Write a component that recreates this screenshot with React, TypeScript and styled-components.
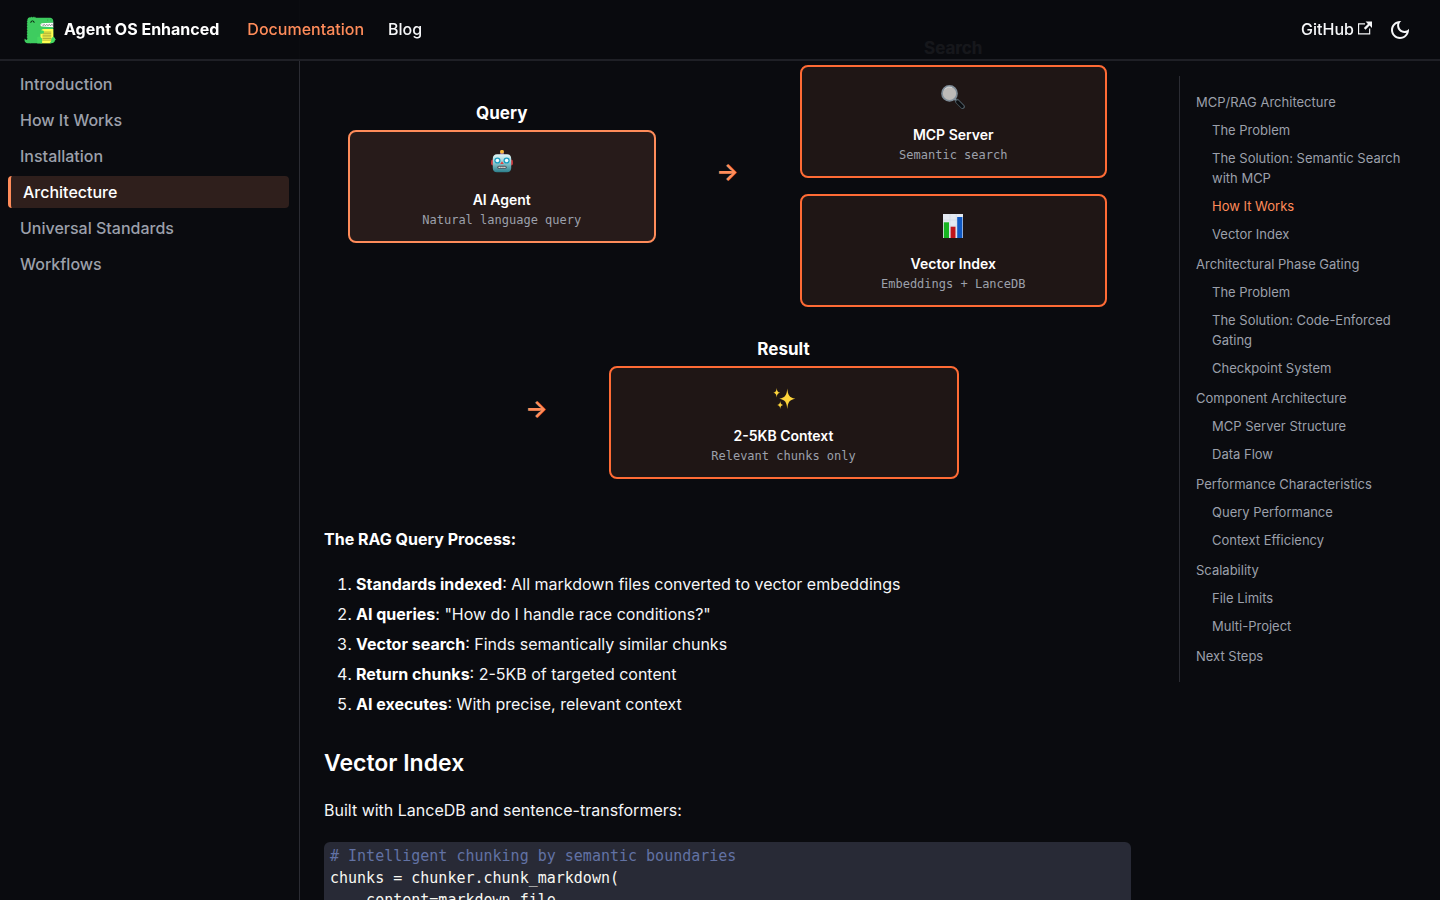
import React from "react";
import styled, { createGlobalStyle } from "styled-components";

const color = {
  page: "#0a0b0f",
  line: "#2b2c33",
  text: "#f5f6f8",
  strong: "#ffffff",
  muted: "#9ca0ab",
  accent: "#ff8c5a",
  accentDeep: "#ff6b35",
};

const sans = `Inter, "Liberation Sans", sans-serif`;
const mono = `"DejaVu Sans Mono", monospace`;

const GlobalStyle = createGlobalStyle`
  *, *::before, *::after { box-sizing: border-box; }
  body {
    margin: 0;
    background: ${color.page};
    color: ${color.text};
    font-family: ${sans};
    font-size: 16px;
    line-height: 26px;
  }
  a { color: inherit; text-decoration: none; }
  code { font: inherit; }
  ul, ol, p, h2, h3 { margin: 0; padding: 0; }
  ul { list-style: none; }
`;

const Shell = styled.div`
  height: 100vh;
  overflow: hidden;
`;

const Header = styled.header`
  position: fixed;
  inset: 0 0 auto 0;
  z-index: 10;
  height: 61px;
  padding: 0 24px;
  display: flex;
  align-items: center;
  background: rgba(10, 11, 15, 0.95);
  border-bottom: 2px solid #1f2026;
`;

const Brand = styled.a`
  display: flex;
  align-items: center;
  gap: 8px;
  margin-right: 16px;
  line-height: 24px;
  font-weight: 700;
  color: ${color.strong};
`;

const NavLabel = styled.span`
  padding-bottom: 2px;
`;

const NavLink = styled.a<{ $active?: boolean }>`
  display: flex;
  align-items: center;
  gap: 4px;
  padding: 0 12px;
  line-height: 24px;
  font-weight: 500;
  color: ${(p) => (p.$active ? color.accent : color.text)};

  svg {
    margin-bottom: 4px;
  }
`;

const NavSpacer = styled.div`
  flex: 1;
`;

const IconButton = styled.button`
  width: 32px;
  height: 32px;
  padding: 0;
  display: grid;
  place-items: center;
  border: 0;
  border-radius: 50%;
  background: transparent;
  color: ${color.text};
  cursor: pointer;
`;

const Body = styled.div`
  display: flex;
  min-height: 100%;
`;

const Sidebar = styled.nav`
  flex: 0 0 300px;
  padding: 68px 10px 8px 8px;
  border-right: 1px solid ${color.line};
`;

const MenuList = styled.ul`
  display: flex;
  flex-direction: column;
  gap: 4px;
`;

const MenuLink = styled.a<{ $active?: boolean }>`
  display: block;
  padding: 0 12px;
  border-radius: 4px;
  line-height: 32px;
  font-weight: 500;
  color: ${(p) => (p.$active ? color.strong : color.muted)};
  background: ${(p) => (p.$active ? "#2f1f1c" : "transparent")};
  border-left: ${(p) => (p.$active ? `3px solid ${color.accent}` : "0")};
`;

const Main = styled.main`
  flex: 1;
  min-width: 0;
  display: grid;
  grid-template-columns: 3fr 1fr;
  align-items: start;
`;

const Article = styled.article`
  min-width: 0;
  padding: 13px 24px 0;
`;

const Diagram = styled.section`
  display: flex;
  flex-wrap: wrap;
  align-items: center;
  justify-content: center;
  gap: 31px 32px;
  padding: 24px;
  margin-bottom: 23px;
`;

const Stage = styled.div`
  flex: 1 1 280px;
  max-width: 350px;
`;

const StageTitle = styled.div`
  margin-bottom: 6px;
  font-size: 17px;
  line-height: 22px;
  font-weight: 700;
  text-align: center;
  color: ${color.strong};
`;

const CardStack = styled.div`
  display: flex;
  flex-direction: column;
  gap: 16px;
`;

const Card = styled.div<{ $light?: boolean }>`
  padding: 12px 16px;
  border: 2px solid ${(p) => (p.$light ? color.accent : color.accentDeep)};
  border-radius: 8px;
  background: ${(p) => (p.$light ? "#271b1a" : "#1f1615")};
  text-align: center;
`;

const CardEmoji = styled.div`
  display: flex;
  align-items: center;
  justify-content: center;
  height: 36px;
  margin-bottom: 10px;
`;

const CardTitle = styled.div`
  margin-bottom: 2px;
  font-size: 14px;
  line-height: 20px;
  font-weight: 600;
  color: ${color.strong};
`;

const CardNote = styled.div`
  font-family: ${mono};
  font-size: 12px;
  line-height: 17px;
  color: ${color.muted};
`;

const Arrow = styled.div`
  flex: 0 0 80px;
  text-align: center;
  font-size: 24px;
  line-height: 32px;
  font-weight: 700;
  color: ${color.accent};
`;

const Paragraph = styled.p`
  margin-bottom: 19px;
`;

const Steps = styled.ol`
  display: flex;
  flex-direction: column;
  gap: 4px;
  padding-left: 32px;
  margin-bottom: 30px;
`;

const Strong = styled.strong`
  font-weight: 700;
  color: ${color.strong};
`;

const Heading = styled.h3`
  margin-bottom: 18px;
  font-size: 23px;
  line-height: 32px;
  font-weight: 600;
  color: ${color.strong};
`;

const CodeBlock = styled.pre`
  margin: 0;
  padding: 3px 6px;
  border-radius: 6px;
  background: #282a36;
  color: #f8f8f2;
  font-family: ${mono};
  font-size: 15px;
  line-height: 22px;
`;

const Comment = styled.span`
  color: #6272a4;
`;

const TocColumn = styled.aside`
  padding: 76px 24px 0;
`;

const TocList = styled.ul`
  display: flex;
  flex-direction: column;
  gap: 2px;
  padding: 12px 0 12px 16px;
  border-left: 1px solid ${color.line};
  font-size: 13px;
  line-height: 20px;
`;

const TocSubList = styled.ul`
  padding-left: 16px;
`;

const TocLink = styled.a<{ $active?: boolean }>`
  display: block;
  padding: 4px 0;
  color: ${(p) => (p.$active ? color.accent : color.muted)};
`;

const Logo = () => (
  <svg width="32" height="32" viewBox="0 0 200 200" fill="none" aria-hidden="true">
    <path fill="#FFF" d="M99 52h84v34H99z" />
    <path fill="#3ECC5F" d="M23 163c-7.398 0-13.843-4.027-17.303-10A19.886 19.886 0 0 0 3 163c0 11.046 8.954 20 20 20h20v-20H23z" />
    <path
      fill="#3ECC5F"
      d="M112.98 57.376L183 53V43c0-11.046-8.954-20-20-20H73l-2.5-4.33c-1.112-1.925-3.889-1.925-5 0L63 23l-2.5-4.33c-1.111-1.925-3.889-1.925-5 0L53 23l-2.5-4.33c-1.111-1.925-3.889-1.925-5 0L43 23c-.022 0-.042.003-.065.003l-4.142-4.141c-1.57-1.571-4.252-.853-4.828 1.294l-1.369 5.104-5.192-1.392c-2.148-.575-4.111 1.389-3.535 3.536l1.39 5.193-5.102 1.367c-2.148.576-2.867 3.259-1.296 4.83l4.142 4.142c0 .021-.003.042-.003.064l-4.33 2.5c-1.925 1.111-1.925 3.889 0 5L23 53l-4.33 2.5c-1.925 1.111-1.925 3.889 0 5L23 63l-4.33 2.5c-1.925 1.111-1.925 3.889 0 5L23 73l-4.33 2.5c-1.925 1.111-1.925 3.889 0 5L23 83l-4.33 2.5c-1.925 1.111-1.925 3.889 0 5L23 93l-4.33 2.5c-1.925 1.111-1.925 3.889 0 5L23 103l-4.33 2.5c-1.925 1.111-1.925 3.889 0 5L23 113l-4.33 2.5c-1.925 1.111-1.925 3.889 0 5L23 123l-4.33 2.5c-1.925 1.111-1.925 3.889 0 5L23 133l-4.33 2.5c-1.925 1.111-1.925 3.889 0 5L23 143l-4.33 2.5c-1.925 1.111-1.925 3.889 0 5L23 153l-4.33 2.5c-1.925 1.111-1.925 3.889 0 5L23 163c0 11.046 8.954 20 20 20h120c11.046 0 20-8.954 20-20V83l-70.02-4.376A10.645 10.645 0 0 1 103 68c0-5.621 4.37-10.273 9.98-10.624"
    />
    <path fill="#FFFF50" d="M103 183h60c11.046 0 20-8.954 20-20V93h-60c-11.046 0-20 8.954-20 20v70z" />
    <path stroke="#000" strokeWidth="2" strokeLinecap="round" d="M118 123h50M118 143h50M118 163h50M118 113h50M118 133h50M118 153h50" />
    <path fill="#3ECC5F" d="M83 183h30v-30H83z" />
    <path fill="#44D860" d="M83 143c12-3 24 1 28 10 5 8 4 22-4 30H83z" />
    <path fill="#3ECC5F" d="M83 123h30v-20H83z" />
    <path fill="#44D860" d="M123 115a2.500 2.500 0 1 0 0-5 2.500 2.500 0 0 0-3-5 2.500 2.500 0 0 0-4-2c-7-2-13 3-13 9.500s6 11.500 13 9.500a2.500 2.500 0 0 0 4-2 2.500 2.500 0 0 0 3-5" />
    <path fill="#44D860" d="M193 155a5 5 0 0 0-4-8 5 5 0 0 0-8-3c-8 4-11 10-11 17 0 9-3 15-9 20 18 4 30-3 32-16a5 5 0 0 0 0-10" />
    <path fill="#000" d="M63 55.500a2.500 2.500 0 0 1-2.500-2.500c0-4.136-3.364-7.500-7.500-7.500s-7.500 3.364-7.500 7.500a2.500 2.500 0 1 1-5 0c0-6.893 5.607-12.500 12.500-12.500S65.500 46.107 65.500 53a2.500 2.500 0 0 1-2.500 2.500" />
    <path stroke="#000" strokeWidth="3" d="M112 66l6 6 8-6 8 6 8-6 8 6 8-6 8 6 8-6 9 5" />
    <path stroke="#1b6b30" strokeWidth="3" d="M145 38h6M165 37h6" />
  </svg>
);

const ExternalIcon = () => (
  <svg width="14" height="14" viewBox="0 0 24 24" fill="currentColor" aria-hidden="true">
    <path d="M21 13v10h-21v-19h12v2h-10v15h17v-8h2zm3-12h-10.988l4.035 4-6.977 7.070 2.828 2.828 6.977-7.070 4.125 4.172v-11z" />
  </svg>
);

const MoonIcon = () => (
  <svg width="24" height="24" viewBox="0 0 24 24" fill="currentColor" aria-hidden="true">
    <path d="M9.37,5.51C9.19,6.15,9.1,6.82,9.1,7.5c0,4.08,3.32,7.4,7.4,7.4c0.68,0,1.35-0.09,1.99-0.27C17.45,17.19,14.93,19,12,19 c-3.86,0-7-3.14-7-7C5,9.07,6.81,6.55,9.37,5.51z M12,3c-4.97,0-9,4.03-9,9s4.03,9,9,9s9-4.03,9-9c0-0.46-0.04-0.92-0.1-1.36 c-0.98,1.37-2.58,2.26-4.4,2.26c-2.98,0-5.4-2.42-5.4-5.4c0-1.81,0.89-3.42,2.26-4.4C12.92,3.04,12.46,3,12,3L12,3z" />
  </svg>
);

const RobotEmoji = () => (
  <svg width="24" height="24" viewBox="0 0 24 24" role="img" aria-label="Robot">
    <defs>
      <linearGradient id="robot-face" x1="0" y1="0" x2="0" y2="1">
        <stop offset="0" stopColor="#e4f8f8" />
        <stop offset="0.45" stopColor="#93ced3" />
        <stop offset="1" stopColor="#2c7f8c" />
      </linearGradient>
    </defs>
    <rect x="1" y="9.500" width="22" height="6" rx="2" fill="#c4363b" />
    <rect x="10" y="2" width="4" height="4" fill="#6a4c9c" />
    <circle cx="12" cy="1.800" r="2" fill="#f6b93a" />
    <path d="M7 4.200h10c2.600 0 4.200 1.700 4.200 4.300v9.500c0 2.800-1.600 4.200-4.200 4.200H7c-2.600 0-4.200-1.400-4.200-4.200V8.500C2.800 5.900 4.400 4.200 7 4.200z" fill="url(#robot-face)" />
    <circle cx="7.400" cy="10.500" r="3.100" fill="#1d9dc0" />
    <circle cx="16.600" cy="10.500" r="3.100" fill="#1d9dc0" />
    <circle cx="7.400" cy="10.500" r="1.800" fill="#f0fdff" />
    <circle cx="16.600" cy="10.500" r="1.800" fill="#f0fdff" />
    <path d="M12 11.200l1.800 2.900h-3.600z" fill="#e2403f" />
    <rect x="7.300" y="15.800" width="9.400" height="3" rx="1.500" fill="#4a5660" />
    <path d="M8.500 17.300h7" stroke="#f2e9e1" strokeWidth="1.300" strokeDasharray="1.400 0.500" />
  </svg>
);

const LensEmoji = () => (
  <svg width="24" height="24" viewBox="0 0 24 24" role="img" aria-label="Magnifying glass" fill="none">
    <path d="M13.800 13.800l3 3" stroke="#8998a5" strokeWidth="2.600" />
    <path d="M16.300 16.300l5.300 5.300" stroke="#4c5961" strokeWidth="4.600" strokeLinecap="round" />
    <path d="M16.600 16.900l4.600 4.600" stroke="#0b0d10" strokeWidth="3" strokeLinecap="round" />
    <circle cx="8.500" cy="8.400" r="7.500" fill="#bdbab8" stroke="#7f8c97" strokeWidth="1.700" />
    <path d="M3.500 4.300A6.600 6.600 0 0 1 11 2.400" stroke="#d8dde0" strokeWidth="0.800" />
  </svg>
);

const ChartEmoji = () => (
  <svg width="24" height="24" viewBox="0 0 24 24" role="img" aria-label="Bar chart">
    <rect x="2" width="20" height="24" fill="#e3e9f2" />
    <path d="M2 6h20M2 12h20M2 18h20M9 0v24M15.300 0v24" stroke="#c9d4e2" strokeWidth="0.500" />
    <rect x="2.800" y="8.300" width="5.200" height="15.700" fill="#16b421" />
    <rect x="9.600" y="12.700" width="4.900" height="11.300" fill="#c1151b" />
    <rect x="16.200" y="3" width="5.200" height="21" fill="#0f59c4" />
  </svg>
);

const SparklesEmoji = () => (
  <svg width="24" height="24" viewBox="0 0 24 24" role="img" aria-label="Sparkles" fill="#fdd43b">
    <path d="M15.300 2.500c.7 6.600 1.700 8.900 8 10.200-6.300 1.300-7.300 3.600-8 10.200-.7-6.600-1.700-8.900-8-10.200 6.300-1.300 7.300-3.600 8-10.200z" />
    <path d="M4.700 2c.3 3 .9 4.100 3.400 4.700-2.500.6-3.100 1.700-3.400 4.700-.3-3-.9-4.100-3.400-4.700C3.800 6.100 4.400 5 4.700 2z" />
    <path d="M8.200 15c.3 2.600.8 3.500 3 4-2.200.5-2.700 1.400-3 4-.3-2.600-.8-3.500-3-4 2.200-.5 2.700-1.400 3-4z" />
  </svg>
);

const menu = ["Introduction", "How It Works", "Installation", "Architecture", "Universal Standards", "Workflows"];

const steps = [
  ["Standards indexed", "All markdown files converted to vector embeddings"],
  ["AI queries", '"How do I handle race conditions?"'],
  ["Vector search", "Finds semantically similar chunks"],
  ["Return chunks", "2-5KB of targeted content"],
  ["AI executes", "With precise, relevant context"],
];

const toc: { title: string; items: string[] }[] = [
  {
    title: "MCP/RAG Architecture",
    items: ["The Problem", "The Solution: Semantic Search with MCP", "How It Works", "Vector Index"],
  },
  {
    title: "Architectural Phase Gating",
    items: ["The Problem", "The Solution: Code-Enforced Gating", "Checkpoint System"],
  },
  { title: "Component Architecture", items: ["MCP Server Structure", "Data Flow"] },
  { title: "Performance Characteristics", items: ["Query Performance", "Context Efficiency"] },
  { title: "Scalability", items: ["File Limits", "Multi-Project"] },
  { title: "Next Steps", items: [] },
];

type NodeCardProps = { emoji: React.ReactNode; title: string; note: string; light?: boolean };

const NodeCard = ({ emoji, title, note, light }: NodeCardProps) => (
  <Card $light={light}>
    <CardEmoji>{emoji}</CardEmoji>
    <CardTitle>{title}</CardTitle>
    <CardNote>{note}</CardNote>
  </Card>
);

export default function App() {
  return (
    <Shell>
      <GlobalStyle />
      <Header>
        <Brand href="#">
          <Logo />
          <NavLabel>Agent OS Enhanced</NavLabel>
        </Brand>
        <NavLink href="#" $active>
          <NavLabel>Documentation</NavLabel>
        </NavLink>
        <NavLink href="#">
          <NavLabel>Blog</NavLabel>
        </NavLink>
        <NavSpacer />
        <NavLink href="#">
          <NavLabel>GitHub</NavLabel>
          <ExternalIcon />
        </NavLink>
        <IconButton type="button" aria-label="Switch colour mode">
          <MoonIcon />
        </IconButton>
      </Header>
      <Body>
        <Sidebar aria-label="Docs sidebar">
          <MenuList>
            {menu.map((item) => (
              <li key={item}>
                <MenuLink href="#" $active={item === "Architecture"}>{item}</MenuLink>
              </li>
            ))}
          </MenuList>
        </Sidebar>
        <Main>
          <Article>
            <Diagram>
              <Stage>
                <StageTitle>Query</StageTitle>
                <NodeCard light emoji={<RobotEmoji />} title="AI Agent" note="Natural language query" />
              </Stage>
              <Arrow>→</Arrow>
              <Stage>
                <StageTitle>Search</StageTitle>
                <CardStack>
                  <NodeCard emoji={<LensEmoji />} title="MCP Server" note="Semantic search" />
                  <NodeCard emoji={<ChartEmoji />} title="Vector Index" note="Embeddings + LanceDB" />
                </CardStack>
              </Stage>
              <Arrow>→</Arrow>
              <Stage>
                <StageTitle>Result</StageTitle>
                <NodeCard emoji={<SparklesEmoji />} title="2-5KB Context" note="Relevant chunks only" />
              </Stage>
            </Diagram>
            <Paragraph>
              <Strong>The RAG Query Process:</Strong>
            </Paragraph>
            <Steps>
              {steps.map(([name, detail]) => (
                <li key={name}>
                  <Strong>{name}</Strong>: {detail}
                </li>
              ))}
            </Steps>
            <Heading>Vector Index</Heading>
            <Paragraph>Built with LanceDB and sentence-transformers:</Paragraph>
            <CodeBlock>
              <code>
                <Comment># Intelligent chunking by semantic boundaries</Comment>
                {"\nchunks = chunker.chunk_markdown(\n    content=markdown_file,"}
              </code>
            </CodeBlock>
          </Article>
          <TocColumn>
            <TocList>
              {toc.map((group) => (
                <li key={group.title}>
                  <TocLink href="#">{group.title}</TocLink>
                  {group.items.length > 0 && (
                    <TocSubList>
                      {group.items.map((item) => (
                        <li key={item}>
                          <TocLink href="#" $active={item === "How It Works"}>{item}</TocLink>
                        </li>
                      ))}
                    </TocSubList>
                  )}
                </li>
              ))}
            </TocList>
          </TocColumn>
        </Main>
      </Body>
    </Shell>
  );
}
